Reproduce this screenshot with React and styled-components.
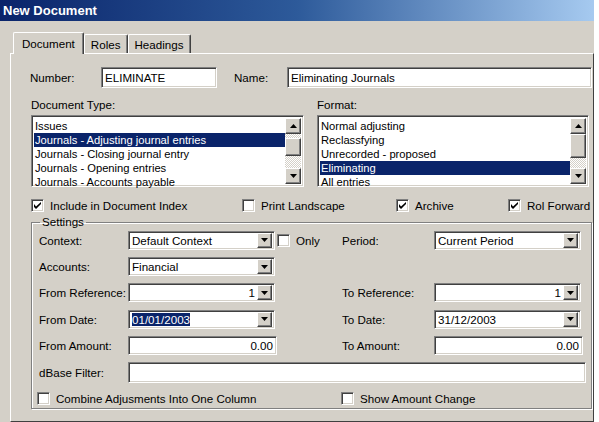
import React from "react";
import styled, { createGlobalStyle, css } from "styled-components";

const GlobalStyle = createGlobalStyle`
  html, body {
    margin: 0;
    background: #ffffff;
  }
  body {
    font-family: "Liberation Sans", Arial, sans-serif;
    font-size: 11.6px;
    color: #000;
  }
`;

const sunken = css`
  border: 1px solid;
  border-color: #808080 #ffffff #ffffff #808080;
  box-shadow: inset 1px 1px 0 #404040, inset -1px -1px 0 #d4d0c8;
`;

const raised = css`
  background: #d4d0c8;
  border: 1px solid;
  border-color: #ffffff #404040 #404040 #ffffff;
  box-shadow: inset -1px -1px 0 #808080;
`;

const Window = styled.div`
  width: 594px;
  height: 422px;
  background: #d4d0c8;
  display: flex;
  flex-direction: column;
  overflow: hidden;
`;

const TitleBar = styled.div`
  height: 21px;
  display: flex;
  align-items: center;
  padding-left: 3px;
  background: linear-gradient(to right, #0a246a 0%, #2d5a9a 50%, #a6caf0 100%);
  color: #fff;
  font-weight: bold;
  font-size: 13px;
`;

const Body = styled.div`
  flex: 1;
  display: flex;
  flex-direction: column;
  padding: 11px 0 0 10px;
`;

const TabStrip = styled.div`
  display: flex;
  align-items: flex-end;
  height: 21px;
  padding-left: 3px;
  position: relative;
  z-index: 1;
`;

const Tab = styled.div`
  height: ${(p) => (p.$active ? 21 : 18)}px;
  padding: 0 ${(p) => (p.$active ? 8 : 6)}px;
  margin-bottom: ${(p) => (p.$active ? -1 : 0)}px;
  display: flex;
  align-items: center;
  background: #d4d0c8;
  border: 1px solid;
  border-bottom: none;
  border-color: #ffffff #404040 #404040 #ffffff;
  border-radius: 2px 2px 0 0;
  box-shadow: inset -1px 0 0 #808080;
`;

const Panel = styled.div`
  flex: 1;
  border: 1px solid;
  border-color: #ffffff #404040 #404040 #ffffff;
  padding: 13px 0 0 19px;
  display: flex;
  flex-direction: column;
`;

const TopRow = styled.div`
  display: flex;
  align-items: center;
  height: 21px;
`;

const Label = styled.span`
  width: ${(p) => p.$w || "auto"};
  margin-left: ${(p) => p.$ml || 0}px;
  flex-shrink: 0;
  white-space: nowrap;
`;

const TextBox = styled.div`
  ${sunken};
  box-sizing: border-box;
  width: ${(p) => p.$w}px;
  height: ${(p) => p.$h || 19}px;
  background: #fff;
  display: flex;
  align-items: center;
  justify-content: ${(p) => (p.$right ? "flex-end" : "flex-start")};
  padding: 0 3px;
  white-space: nowrap;
`;

const ListsRow = styled.div`
  display: flex;
  gap: 13px;
  margin-top: 10px;
  margin-left: 1px;
`;

const ListColumn = styled.div`
  display: flex;
  flex-direction: column;
  gap: 4px;
`;

const ListBox = styled.div`
  ${sunken};
  box-sizing: border-box;
  width: ${(p) => p.$w}px;
  height: 72px;
  background: #fff;
  display: flex;
  padding: 2px;
`;

const Items = styled.div`
  flex: 1;
  display: flex;
  flex-direction: column;
  padding-top: 1px;
  font-size: 11.2px;
`;

const Item = styled.div`
  height: 14px;
  line-height: 14px;
  padding-left: 1px;
  white-space: nowrap;
  background: ${(p) => (p.$sel ? "#0a246a" : "transparent")};
  color: ${(p) => (p.$sel ? "#fff" : "#000")};
`;

const ScrollBar = styled.div`
  width: 16px;
  display: flex;
  flex-direction: column;
  background: repeating-conic-gradient(#ffffff 0 25%, #d4d0c8 0 50%) 0 0 / 2px 2px;
`;

const ScrollButton = styled.div`
  ${raised};
  box-sizing: border-box;
  height: 16px;
  display: flex;
  align-items: center;
  justify-content: center;
`;

const Thumb = styled.div`
  ${raised};
  box-sizing: border-box;
  height: ${(p) => p.$h}px;
  margin-top: ${(p) => p.$top}px;
`;

const Track = styled.div`
  flex: 1;
`;

const Arrow = ({ up }) => (
  <svg width="7" height="4" viewBox="0 0 7 4">
    <path d={up ? "M0 4 L3.5 0 L7 4 Z" : "M0 0 L7 0 L3.5 4 Z"} fill="#000" />
  </svg>
);

const ChecksRow = styled.div`
  display: flex;
  align-items: center;
  height: 14px;
  margin-top: 11px;
  margin-left: 1px;
`;

const CheckItem = styled.label`
  display: flex;
  align-items: center;
  gap: 6px;
  width: ${(p) => p.$w || "auto"};
  flex-shrink: 0;
  white-space: nowrap;
`;

const Box = styled.span`
  ${sunken};
  box-sizing: border-box;
  width: 13px;
  height: 13px;
  background: #fff;
  display: flex;
  align-items: center;
  justify-content: center;
  flex-shrink: 0;
`;

const Check = ({ on, label, w }) => (
  <CheckItem $w={w}>
    <Box>
      {on && (
        <svg width="7" height="7" viewBox="0 0 7 7">
          <path d="M0 2 L0 5 L2 7 L7 2 L7 0 L2 4.5 Z" fill="#000" />
        </svg>
      )}
    </Box>
    {label && <span>{label}</span>}
  </CheckItem>
);

const GroupBox = styled.fieldset`
  margin: 4px 1px 0 1px;
  padding: 0 0 0 7px;
  border: 1px solid #808080;
  box-shadow: inset 1px 1px 0 #ffffff, 1px 1px 0 #ffffff;
  border-radius: 0;
  min-width: 0;
  height: 193px;
  box-sizing: border-box;
`;

const Legend = styled.legend`
  padding: 0 2px;
  margin-left: 1px;
  line-height: 12px;
`;

const SettingsGrid = styled.div`
  display: grid;
  grid-template-columns: 89px 149px 65px 92px 149px;
  grid-auto-rows: 26.4px;
  align-items: center;
  margin-top: -1px;
`;

const Combo = styled.div`
  ${sunken};
  box-sizing: border-box;
  width: ${(p) => p.$w || 147}px;
  height: 19px;
  background: #fff;
  display: flex;
  align-items: center;
  padding: 2px;
`;

const ComboText = styled.div`
  flex: 1;
  display: flex;
  justify-content: ${(p) => (p.$right ? "flex-end" : "flex-start")};
  padding: 0 2px 0 1px;
  white-space: nowrap;
`;

const Selected = styled.span`
  background: #0a246a;
  color: #fff;
`;

const DropButton = styled.div`
  ${raised};
  box-sizing: border-box;
  width: 15px;
  height: 15px;
  display: flex;
  align-items: center;
  justify-content: center;
`;

const Span = styled.div`
  grid-column: ${(p) => p.$col};
`;

const BottomChecks = styled.div`
  display: grid;
  grid-template-columns: 304px 1fr;
  align-items: center;
  margin-top: 7px;
  margin-left: -2px;
`;

const ComboBox = ({ children, right, w }) => (
  <Combo $w={w}>
    <ComboText $right={right}>{children}</ComboText>
    <DropButton>
      <Arrow />
    </DropButton>
  </Combo>
);

const ScrollList = ({ items, selected, w, thumbTop, thumbH }) => (
  <ListBox $w={w}>
    <Items>
      {items.map((t, i) => (
        <Item key={t} $sel={i === selected}>
          {t}
        </Item>
      ))}
    </Items>
    <ScrollBar>
      <ScrollButton>
        <Arrow up />
      </ScrollButton>
      <Thumb $top={thumbTop} $h={thumbH} />
      <Track />
      <ScrollButton>
        <Arrow />
      </ScrollButton>
    </ScrollBar>
  </ListBox>
);

const docTypes = [
  "Issues",
  "Journals - Adjusting journal entries",
  "Journals - Closing journal entry",
  "Journals - Opening entries",
  "Journals - Accounts payable",
];

const formats = [
  "Normal adjusting",
  "Reclassfying",
  "Unrecorded - proposed",
  "Eliminating",
  "All entries",
];

export default function App() {
  return (
    <>
      <GlobalStyle />
      <Window>
        <TitleBar>New Document</TitleBar>
        <Body>
          <TabStrip>
            <Tab $active>Document</Tab>
            <Tab>Roles</Tab>
            <Tab>Headings</Tab>
          </TabStrip>
          <Panel>
            <TopRow>
              <Label $w="71px">Number:</Label>
              <TextBox $w={116} $h={21}>ELIMINATE</TextBox>
              <Label $w="53px" $ml={17}>Name:</Label>
              <TextBox $w={305} $h={21}>Eliminating Journals</TextBox>
            </TopRow>

            <ListsRow>
              <ListColumn>
                <Label>Document Type:</Label>
                <ScrollList items={docTypes} selected={1} w={273} thumbTop={4} thumbH={18} />
              </ListColumn>
              <ListColumn>
                <Label>Format:</Label>
                <ScrollList items={formats} selected={3} w={272} thumbTop={0} thumbH={24} />
              </ListColumn>
            </ListsRow>

            <ChecksRow>
              <Check on label="Include in Document Index" w="211px" />
              <Check label="Print Landscape" w="154px" />
              <Check on label="Archive" w="112px" />
              <Check on label="Rol Forward" />
            </ChecksRow>

            <GroupBox>
              <Legend>Settings</Legend>
              <SettingsGrid>
                <Label>Context:</Label>
                <ComboBox>Default Context</ComboBox>
                <Check label="Only" />
                <Label>Period:</Label>
                <ComboBox>Current Period</ComboBox>

                <Label>Accounts:</Label>
                <ComboBox>Financial</ComboBox>
                <Span $col="3 / 6" />

                <Label>From Reference:</Label>
                <ComboBox right>1</ComboBox>
                <span />
                <Label>To Reference:</Label>
                <ComboBox right>1</ComboBox>

                <Label>From Date:</Label>
                <ComboBox>
                  <Selected>01/01/2003</Selected>
                </ComboBox>
                <span />
                <Label>To Date:</Label>
                <ComboBox>31/12/2003</ComboBox>

                <Label>From Amount:</Label>
                <TextBox $w={149} $right>0.00</TextBox>
                <span />
                <Label>To Amount:</Label>
                <TextBox $w={149} $right>0.00</TextBox>

                <Label>dBase Filter:</Label>
                <Span $col="2 / 6">
                  <TextBox $w={458} $h={21} />
                </Span>
              </SettingsGrid>
              <BottomChecks>
                <Check label="Combine Adjusments Into One Column" />
                <Check label="Show Amount Change" />
              </BottomChecks>
            </GroupBox>
          </Panel>
        </Body>
      </Window>
    </>
  );
}
